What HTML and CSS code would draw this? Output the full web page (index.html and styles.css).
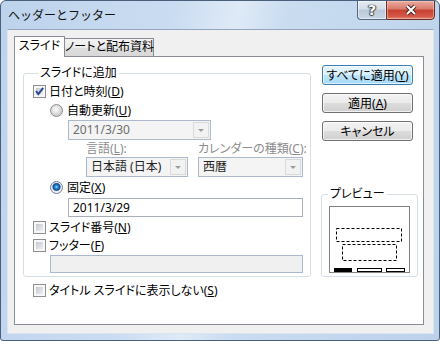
FILE: index.html
```html
<!DOCTYPE html>
<html>
<head>
<meta charset="utf-8">
<title>ヘッダーとフッター</title>
<link rel="stylesheet" href="styles.css">
</head>
<body>

<div class="window">
  <div class="titlebar">
    <span class="title">ヘッダーとフッター</span>
    <div class="caption">
      <span class="cbtn help">?</span>
      <span class="cbtn close">
        <svg width="14" height="12" viewBox="0 0 14 12"><path d="M3 2 L11 10 M11 2 L3 10" stroke="#4a2623" stroke-width="4"/><path d="M3 2 L11 10 M11 2 L3 10" stroke="#fff" stroke-width="2"/></svg>
      </span>
    </div>
  </div>

  <div class="client">
    <div class="tabs">
      <span class="tab active">スライド</span>
      <span class="tab">ノートと配布資料</span>
    </div>

    <div class="panel">
      <div class="main">
        <fieldset class="group add">
          <legend>スライドに追加</legend>
          <div class="row"><span class="box"><svg width="11" height="11" viewBox="0 0 11 11"><path d="M2 5 L4.3 8 L9.2 1.8" fill="none" stroke="#2b4793" stroke-width="2"/></svg></span><span>日付と時刻(<u>D</u>)</span></div>
          <div class="row ind1 gap1"><span class="radio"></span><span>自動更新(<u>U</u>)</span></div>
          <div class="select date ind2 gap1"><span class="val dim">2011/3/30</span><span class="arrow"></span></div>
          <div class="labels"><span class="lbl-lang">言語(<u>L</u>):</span><span>カレンダーの種類(<u>C</u>):</span></div>
          <div class="pair">
            <div class="select lang"><span class="val">日本語 (日本)</span><span class="arrow"></span></div>
            <div class="select cal"><span class="val">西暦</span><span class="arrow"></span></div>
          </div>
          <div class="row ind1 gap1"><span class="radio on"></span><span>固定(<u>X</u>)</span></div>
          <div class="field fixed ind2">2011/3/29</div>
          <div class="row gap1"><span class="box"></span><span>スライド番号(<u>N</u>)</span></div>
          <div class="row"><span class="box"></span><span>フッター(<u>F</u>)</span></div>
          <div class="field footer ind1"></div>
        </fieldset>

        <div class="side">
          <button class="btn default">すべてに適用(<u>Y</u>)</button>
          <button class="btn">適用(<u>A</u>)</button>
          <button class="btn">キャンセル</button>

          <fieldset class="group preview">
            <legend>プレビュー</legend>
            <svg class="pv" width="81" height="67" viewBox="0 0 81 67">
              <rect x="0.5" y="0.5" width="80" height="66" fill="#fff" stroke="#828282"/>
              <rect x="7.5" y="22.5" width="65" height="13" fill="none" stroke="#000" stroke-dasharray="3 2"/>
              <rect x="13.5" y="38.5" width="54" height="16" fill="none" stroke="#000" stroke-dasharray="3 2"/>
              <rect x="5" y="62" width="18" height="4" fill="#000"/>
              <rect x="28.5" y="62.5" width="24" height="3" fill="none" stroke="#000"/>
              <rect x="57.5" y="62.5" width="18" height="3" fill="none" stroke="#000"/>
            </svg>
          </fieldset>
        </div>
      </div>

      <div class="row last"><span class="box"></span><span>タイトル スライドに表示しない(<u>S</u>)</span></div>
    </div>
  </div>
</div>

</body>
</html>
```

FILE: styles.css
```css
* { box-sizing: border-box; }
body { margin: 0; background: #fff; color: #000; font: 12px "Noto Sans", "Noto Sans CJK JP", sans-serif; font-feature-settings: "palt"; }
u { text-underline-offset: 1px; }

.window { width: 440px; height: 341px; display: flex; flex-direction: column; border: 1px solid #4a5f7c; border-radius: 6px 6px 3px 3px; overflow: hidden;
  background: linear-gradient(100deg, #bdd3ec 0%, #cadcf1 35%, #dfeaf7 48%, #c9dcf0 58%, #bcd2eb 100%); }

.titlebar { height: 28px; display: flex; align-items: center; padding-left: 7px; }
.title { font-feature-settings: normal; color: #111; }
.caption { margin-left: auto; margin-right: 4px; align-self: flex-start; margin-top: -1px; display: flex; }
.cbtn { height: 20px; display: flex; align-items: center; justify-content: center; border: 1px solid #55677e; }
.help { width: 29px; border-radius: 0 0 0 4px; border-right: none; color: #fff; font: bold 14px "DejaVu Sans", sans-serif;
  text-shadow: 0 0 1px #333, 1px 0 1px #444, -1px 0 1px #444, 0 1px 1px #444;
  background: linear-gradient(#e3eaf2, #d3dee9 45%, #b9c9da 50%, #c9d7e6); box-shadow: inset 0 0 0 1px rgba(255,255,255,.5); }
.close { width: 49px; border-color: #6a2b25; border-radius: 0 0 4px 0;
  background: linear-gradient(#eaa99e, #d97b6d 45%, #c7412f 50%, #d4574a 85%, #e08a6e); box-shadow: inset 0 0 0 1px rgba(255,220,210,.45); }

.client { flex: 1; margin: 0 5px 6px 6px; display: flex; flex-direction: column; padding: 6px 9px 8px 6px; background: #f0f0f0;
  border: 1px solid #dbe5f1; border-top-color: #93a6be; }

.tabs { height: 21px; margin-bottom: -1px; display: flex; align-items: flex-end; position: relative; z-index: 1; }
.tab { width: 90px; height: 18px; margin: 0 0 1px -1px; border: 1px solid #898c95; border-bottom: none; text-align: center; line-height: 16px; white-space: nowrap;
  background: linear-gradient(#f3f3f3, #ebebeb 50%, #dedede 51%, #d8d8d8); }
.tab.active { width: 51px; height: 21px; margin: 0; background: #fff; line-height: 18px; }

.panel { flex: 1; background: #fff; border: 1px solid #898c95; padding: 8px 0 0 8px; }
.main { display: flex; }

.group { margin: 0; min-width: 0; border: 1px solid #d5dfe5; border-radius: 3px; }
.group legend { padding: 0 2px; line-height: 14px; }

.add { width: 288px; margin-top: 1px; padding: 2px 0 3px 9px; }
.add legend { margin-left: 5px; }

.row { height: 18px; display: flex; align-items: center; gap: 3px; white-space: nowrap; }
.gap1 { margin-top: 1px; }
.ind1 { margin-left: 17px; }
.ind2 { margin-left: 35px; }
.row.ind1 { gap: 4px; }

.box { width: 13px; height: 13px; padding: 2px; border: 1px solid #8e8f8f; background: linear-gradient(135deg, #c3c7cd, #eeeff1) content-box, #f7f7f7; }
.box svg { display: block; margin: -2px; }
.radio { width: 13px; height: 13px; border-radius: 50%; border: 1px solid #8e8f8f;
  background: radial-gradient(circle at 45% 40%, #fbfbfb 0, #e6e6e6 3px, #cdcdcd 6px); }
.radio.on { border-color: #6d7f96; background: radial-gradient(circle at 50% 45%, #a6dcff 0, #2a8ee0 1.5px, #0d4f97 3.3px, #7b93ad 4px, #e9e9e9 4.5px, #f6f6f6 6px); }

.select { height: 20px; display: flex; border: 1px solid #acb9cc; background: #f4f4f4; }
.select .val { flex: 1; padding-left: 4px; line-height: 18px; color: #222; white-space: nowrap; }
.select .val.dim { color: #6d6d6d; }
.select .arrow { width: 16px; margin: 1px; border: 1px solid #d9d9d9; background: #f2f2f2; display: flex; align-items: center; justify-content: center; }
.select .arrow::after { content: ""; border: 3px solid transparent; border-top: 3px solid #9c9c9c; border-bottom: none; }
.date { width: 143px; margin-top: 1px; }

.labels { display: flex; height: 14px; line-height: 14px; margin: 2px 0 0 53px; color: #8c8c8c; white-space: nowrap; }
.lbl-lang { width: 112px; }
.pair { display: flex; gap: 10px; margin: 1px 0 0 53px; }
.lang { width: 102px; }
.cal { width: 105px; }

.field { border: 1px solid #a9afb8; background: #fff; padding-left: 4px; }
.fixed { width: 235px; height: 19px; line-height: 17px; margin-top: 2px; }
.footer { width: 253px; height: 18px; margin-top: 1px; background: #f0f0f0; border-color: #acb9cc; }

.side { width: 97px; margin-left: 10px; display: flex; flex-direction: column; }
.btn { width: 91px; height: 20px; margin: 0 0 8px 1px; padding: 0; font: inherit; color: #000; border: 1px solid #707070; border-radius: 3px;
  background: linear-gradient(#f2f2f2, #ebebeb 48%, #dddddd 50%, #cfcfcf); box-shadow: inset 0 0 0 1px rgba(255,255,255,.7); }
.btn + .btn + .btn { margin-bottom: 0; }
.btn.default { border-color: #3c7fb1; background: linear-gradient(#eaf6fd, #d9f0fc 48%, #bee6fd 50%, #a7d9f5); box-shadow: inset 0 0 0 1px rgba(255,255,255,.6); }

.preview { margin-top: auto; width: 97px; padding: 0 0 3px 0; }
.preview legend { margin-left: 6px; }
.pv { display: block; margin: 5px 0 0 7px; }

.last { margin: 4px 0 0 10px; }
```
